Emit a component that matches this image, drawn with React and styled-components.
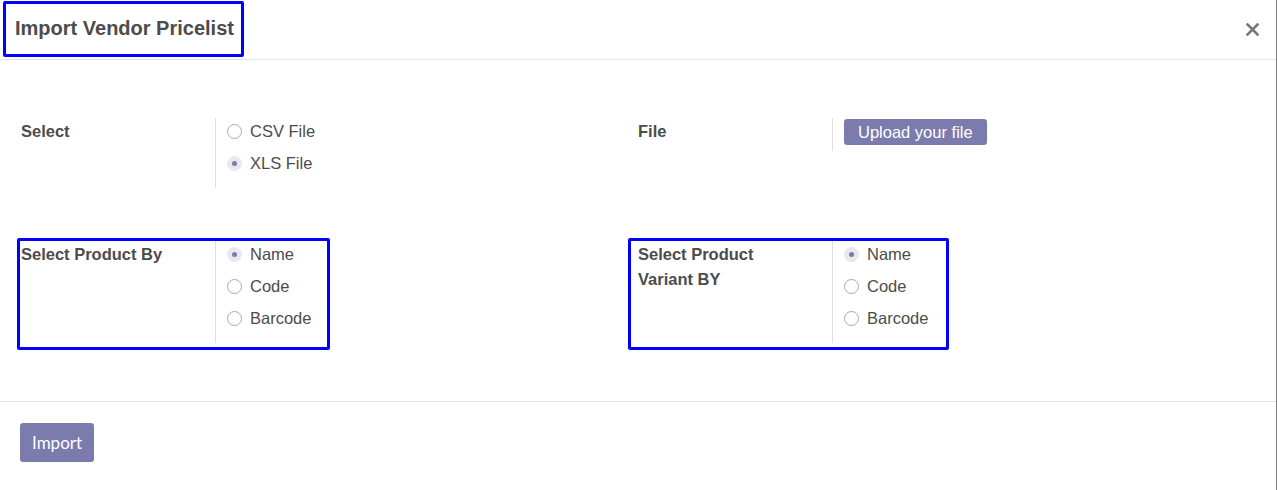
import styled, { createGlobalStyle } from "styled-components"

const GlobalStyle = createGlobalStyle`
  html, body {
    margin: 0;
    padding: 0;
    background: #808080;
  }
  body {
    font-family: "Liberation Sans", Arial, sans-serif;
    color: #4c4c4c;
  }
`

const Modal = styled.div`
  width: 1276px;
  height: 490px;
  background: #ffffff;
  display: flex;
  flex-direction: column;
`

const Header = styled.div`
  height: 60px;
  border-bottom: 1px solid #e6e6e6;
  display: flex;
  align-items: center;
  justify-content: space-between;
  padding: 0 15px;
  box-sizing: border-box;
`

const Title = styled.h4`
  margin: 0;
  font-size: 20px;
  font-weight: 700;
  line-height: 24px;
  color: #4c4c4c;
  padding-bottom: 3px;
`

const Marked = styled.span`
  position: relative;
  display: inline-block;

  &::after {
    content: "";
    position: absolute;
    top: ${(p) => p.$box.top}px;
    left: ${(p) => p.$box.left}px;
    width: ${(p) => p.$box.width}px;
    height: ${(p) => p.$box.height}px;
    border: 3px solid #0000ff;
    border-radius: 2px;
    box-sizing: border-box;
    pointer-events: none;
  }
`

const Close = styled.button`
  border: none;
  background: none;
  padding: 0;
  margin-right: 2px;
  color: #777777;
  cursor: pointer;
  display: flex;
`

const Body = styled.div`
  display: grid;
  grid-template-columns: 617px 1fr;
  align-items: start;
  row-gap: 53px;
  padding: 58px 0 58px 21px;
  border-bottom: 1px solid #e6e6e6;
`

const Field = styled.div`
  display: flex;
  align-items: stretch;
  position: relative;
`

const Label = styled.div`
  width: 194px;
  box-sizing: border-box;
  padding-right: 20px;
  padding-top: 1px;
  font-size: 16.5px;
  font-weight: 700;
  line-height: 25px;
`

const Control = styled.div`
  border-left: 1px solid #dedede;
  padding: ${(p) => (p.$button ? "1px" : "0")} 0 6px 11px;
`

const Option = styled.label`
  display: flex;
  align-items: center;
  gap: 8px;
  height: 26px;
  margin-bottom: 6px;
  font-size: 16.5px;
  cursor: pointer;
`

const Radio = styled.span`
  width: 15px;
  height: 15px;
  border-radius: 50%;
  box-sizing: border-box;
  display: flex;
  align-items: center;
  justify-content: center;
  background: ${(p) => (p.$checked ? "#e8e8ef" : "#ffffff")};
  border: 1px solid ${(p) => (p.$checked ? "#e8e8ef" : "#a9a9b3")};

  &::after {
    content: "";
    width: 5px;
    height: 5px;
    border-radius: 50%;
    background: #7c7bad;
    display: ${(p) => (p.$checked ? "block" : "none")};
  }
`

const Button = styled.button`
  border: none;
  border-radius: 3px;
  background: #7c7bad;
  color: #ffffff;
  cursor: pointer;
  font-family: ${(p) => (p.$lato ? "Lato" : "\"Liberation Sans\"")}, Arial, sans-serif;
  font-size: ${(p) => (p.$lato ? "17px" : "16.5px")};
  height: ${(p) => (p.$lato ? "39px" : "26px")};
  padding: 0 ${(p) => (p.$lato ? "12px" : "14px")};
  line-height: 1;
`

const Footer = styled.div`
  padding: 21px 20px;
`

function RadioGroup({ options, value }) {
  return (
    <Control>
      {options.map((o) => (
        <Option key={o}>
          <Radio $checked={o === value} />
          {o}
        </Option>
      ))}
    </Control>
  )
}

export default function App() {
  return (
    <>
      <GlobalStyle />
      <Modal>
        <Header>
          <Title>
            <Marked $box={{ top: -15, left: -12, width: 241, height: 56 }}>
              Import Vendor Pricelist
            </Marked>
          </Title>
          <Close aria-label="close">
            <svg width="13" height="13" viewBox="0 0 13 13">
              <path d="M1.5 1.5 L11.5 11.5 M11.5 1.5 L1.5 11.5" stroke="currentColor" strokeWidth="2.6" strokeLinecap="square" />
            </svg>
          </Close>
        </Header>

        <Body>
          <Field>
            <Label>Select</Label>
            <RadioGroup options={["CSV File", "XLS File"]} value="XLS File" />
          </Field>
          <Field>
            <Label>File</Label>
            <Control $button>
              <Button>Upload your file</Button>
            </Control>
          </Field>

          <Marked as={Field} $box={{ top: -3, left: -4, width: 313, height: 112 }}>
            <Label>Select Product By</Label>
            <RadioGroup options={["Name", "Code", "Barcode"]} value="Name" />
          </Marked>
          <Marked as={Field} $box={{ top: -3, left: -10, width: 321, height: 112 }}>
            <Label>Select Product Variant BY</Label>
            <RadioGroup options={["Name", "Code", "Barcode"]} value="Name" />
          </Marked>
        </Body>

        <Footer>
          <Button $lato>Import</Button>
        </Footer>
      </Modal>
    </>
  )
}
